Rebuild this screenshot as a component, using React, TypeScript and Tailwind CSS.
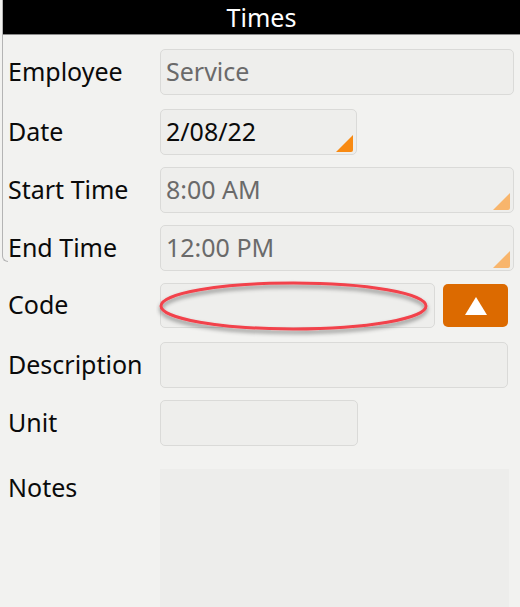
import React from "react";

const font = { fontFamily: '"Noto Sans", "Open Sans", sans-serif' };

function Corner({ light }: { light?: boolean }) {
  return (
    <svg
      className="absolute right-[3px] bottom-[2px]"
      width="17"
      height="17"
      viewBox="0 0 17 17"
    >
      <path d="M17 0 L17 15 Q17 17 15 17 L0 17 Z" fill={light ? "#f8b56c" : "#f88a12"} />
    </svg>
  );
}

function Label({ children, top }: { children: React.ReactNode; top?: boolean }) {
  return (
    <div
      className={`w-[160px] shrink-0 pl-[8px] text-[25px] leading-[30px] text-[#0a0a0a] ${
        top ? "self-start pt-[3px]" : "pb-[3px]"
      }`}
    >
      {children}
    </div>
  );
}

function Field({
  w,
  text,
  dark,
  corner,
  h = "h-[46px]",
}: {
  w: string;
  text?: string;
  dark?: boolean;
  corner?: "dark" | "light";
  h?: string;
}) {
  return (
    <div
      className={`relative ${w} ${h} rounded-[5px] border border-[#dadad8] bg-[#eeeeec] flex items-center pl-[5px] pb-[1px] text-[25px] ${
        dark ? "text-[#0a0a0a]" : "text-[#6a6a6a]"
      }`}
    >
      {text}
      {corner && <Corner light={corner === "light"} />}
    </div>
  );
}

export default function App() {
  return (
    <div className="relative w-[520px] h-[607px] overflow-hidden bg-[#f2f2f0]" style={font}>
      <div className="absolute left-[2px] top-[-6px] h-[268px] w-[6px] border-l border-b border-[#b4b4b4] rounded-bl-[6px] rounded-tl-[6px]" />
      <div className="ml-[3px] h-[35px] bg-black border-b border-[#8a8a8a] flex items-center justify-center text-white text-[25px] leading-none">
        Times
      </div>

      <div className="flex flex-col">
        <div className="mt-[14px] flex items-center">
          <Label>Employee</Label>
          <Field w="w-[354px]" text="Service" />
        </div>
        <div className="mt-[14px] flex items-center">
          <Label>Date</Label>
          <Field w="w-[197px]" text="2/08/22" dark corner="dark" />
        </div>
        <div className="mt-[12px] flex items-center">
          <Label>Start Time</Label>
          <Field w="w-[354px]" text="8:00 AM" corner="light" />
        </div>
        <div className="mt-[12px] flex items-center">
          <Label>End Time</Label>
          <Field w="w-[354px]" text="12:00 PM" corner="light" />
        </div>
        <div className="mt-[12px] flex items-center">
          <Label>Code</Label>
          <div className="relative">
            <Field w="w-[275px]" h="h-[45px]" />
            <svg
              className="absolute left-[-4px] top-[-6px] pointer-events-none"
              width="280"
              height="62"
              viewBox="0 0 280 62"
            >
              <defs>
                <filter id="sh" x="-10%" y="-30%" width="120%" height="170%">
                  <feDropShadow dx="0" dy="3" stdDeviation="2" floodColor="#000" floodOpacity="0.45" />
                </filter>
              </defs>
              <ellipse
                cx="137.5"
                cy="29"
                rx="132.5"
                ry="23"
                fill="none"
                stroke="#f2424c"
                strokeWidth="3"
                filter="url(#sh)"
              />
            </svg>
          </div>
          <button className="ml-[8px] w-[65px] h-[43px] rounded-[5px] bg-[#dc6a00] flex items-center justify-center">
            <svg width="24" height="20" viewBox="0 0 24 20">
              <path d="M12 1 L23 19 L1 19 Z" fill="#fff" />
            </svg>
          </button>
        </div>
        <div className="mt-[14px] flex items-center">
          <Label>Description</Label>
          <Field w="w-[348px]" />
        </div>
        <div className="mt-[12px] flex items-center">
          <Label>Unit</Label>
          <Field w="w-[198px]" />
        </div>
        <div className="mt-[23px] flex">
          <Label top>Notes</Label>
          <div className="w-[349px] h-[140px] bg-[#ededeb]" />
        </div>
      </div>
    </div>
  );
}
